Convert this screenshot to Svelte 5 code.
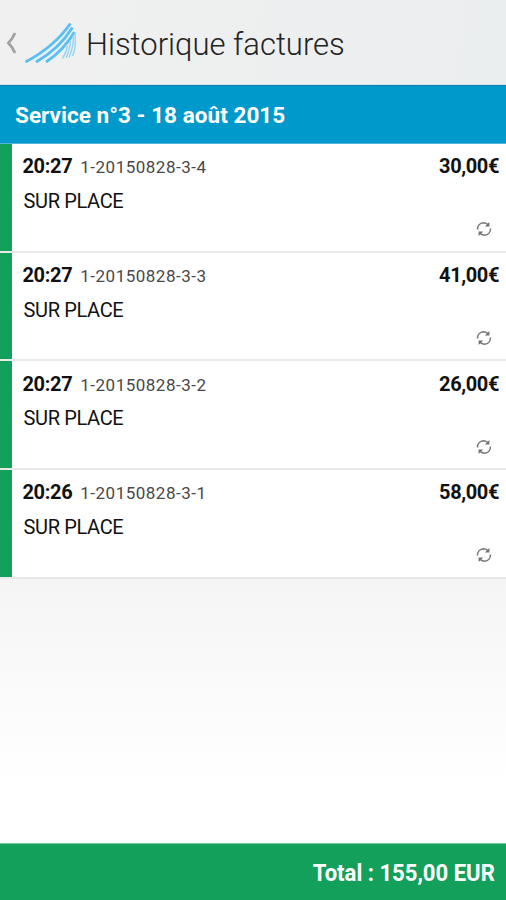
<script>
  const bills = [
    { time: '20:27', ref: '1-20150828-3-4', amount: '30,00€' },
    { time: '20:27', ref: '1-20150828-3-3', amount: '41,00€' },
    { time: '20:27', ref: '1-20150828-3-2', amount: '26,00€' },
    { time: '20:26', ref: '1-20150828-3-1', amount: '58,00€' }
  ];
</script>

<main>
  <header>
    <svg class="back" width="12" height="24" viewBox="0 0 12 24" aria-hidden="true">
      <path d="M10 2Q7.500 8 3.400 12 7.500 16 10 22" fill="none" stroke="#a2a2a2" stroke-width="2.800" />
    </svg>
    <svg class="logo" width="54" height="42" viewBox="0 0 54 42" aria-hidden="true">
      <g fill="none" stroke="#5ac0f0" stroke-width="2.900">
        <path d="M1.500 40Q30 25 46.500 1.500" />
        <path d="M12 40Q35 27 48.500 5.500" />
        <path d="M22 40Q39 29 50.500 10" />
      </g>
      <g fill="none" stroke="#93d4f3" stroke-width="1.400">
        <path d="M38.500 36.500Q42 31 43.500 24" />
        <path d="M42 36Q45.500 29 46.500 19" />
        <path d="M45 35.500Q49 27 49.500 15" />
        <path d="M48.500 34Q52.500 26 51 11" />
      </g>
    </svg>
    <h1>Historique factures</h1>
  </header>

  <h2>Service n°3 - 18 août 2015</h2>

  <ul>
    {#each bills as bill}
      <li>
        <div class="line">
          <span class="time">{bill.time}</span>
          <span class="ref">{bill.ref}</span>
          <span class="amount">{bill.amount}</span>
        </div>
        <div class="place">SUR PLACE</div>
        <svg class="sync" width="16" height="16" viewBox="0 0 16 16" aria-hidden="true">
          <g fill="none" stroke="#777" stroke-width="1.500">
            <path d="M1.500 8.600C1.400 4.500 4 2 7.400 1.800c1.800 0 3 .6 4.200 1.600" />
            <path d="M14.500 7.400c.1 4.100-2.500 6.600-5.900 6.800-1.800 0-3-.6-4.200-1.600" />
          </g>
          <path d="M13.400 1v4.600H8.900zM2.600 15v-4.600h4.500z" fill="#707070" />
        </svg>
      </li>
    {/each}
  </ul>

  <div class="space"></div>
  <footer><span>Total : 155,00 EUR</span></footer>
</main>

<style>
  :global(body) { margin: 0; }
  main {
    width: 506px;
    height: 900px;
    display: flex;
    flex-direction: column;
    overflow: hidden;
    font-family: Roboto, "Liberation Sans", sans-serif;
    white-space: nowrap;
    background: #fff;
  }
  header {
    box-sizing: border-box;
    height: 85px;
    flex: none;
    display: flex;
    align-items: center;
    padding: 2px 0 0 5px;
    background: linear-gradient(100deg, #f0f0f0, #ebeeef);
    border-bottom: 1px solid #d3e6ec;
  }
  .logo { margin-left: 7px; }
  h1 {
    margin: 4px 0 0 8px;
    font-size: 31px;
    line-height: 36px;
    font-weight: 300;
    color: #222;
  }
  h2 {
    box-sizing: border-box;
    height: 59px;
    flex: none;
    margin: 0;
    padding-left: 15px;
    border-top: 1px solid #087eac;
    border-bottom: 1px solid #55b4da;
    font-size: 22.5px;
    line-height: 59px;
    font-weight: 700;
    letter-spacing: 0.04px;
    color: #fff;
    background: #0099cc;
  }
  ul { margin: 0; padding: 0; list-style: none; }
  li {
    box-sizing: border-box;
    height: 108.7px;
    display: flex;
    flex-direction: column;
    padding: 9.4px 7px 0 22.5px;
    border-bottom: 2px solid #e9e9e9;
    background: linear-gradient(90deg, #12a05a 11.5px, #fff 12px) padding-box;
    color: #111;
  }
  .line { display: flex; align-items: baseline; height: 26px; line-height: 26px; }
  .time, .amount { font-size: 20px; font-weight: 700; letter-spacing: -0.4px; }
  .time { letter-spacing: -0.35px; }
  .ref { margin-left: 8px; font-size: 17px; letter-spacing: 0.5px; color: #484848; }
  .amount { margin-left: auto; }
  .place { margin: 8.6px 0 0 1px; height: 26px; line-height: 26px; font-size: 20px; letter-spacing: -0.35px; }
  .sync { align-self: flex-end; margin: 7.2px 7px 0 0; }
  .space { flex: 1; background: linear-gradient(#f5f5f5, #fff 78%); }
  footer {
    box-sizing: border-box;
    height: 57px;
    flex: none;
    padding-right: 11px;
    border-top: 1px solid #80c9a3;
    font-size: 24px;
    line-height: 58px;
    font-weight: 700;
    text-align: right;
    color: #fff;
    background: #12a05a;
  }
  footer span { display: inline-block; transform: scaleX(0.92); transform-origin: right center; }
</style>
